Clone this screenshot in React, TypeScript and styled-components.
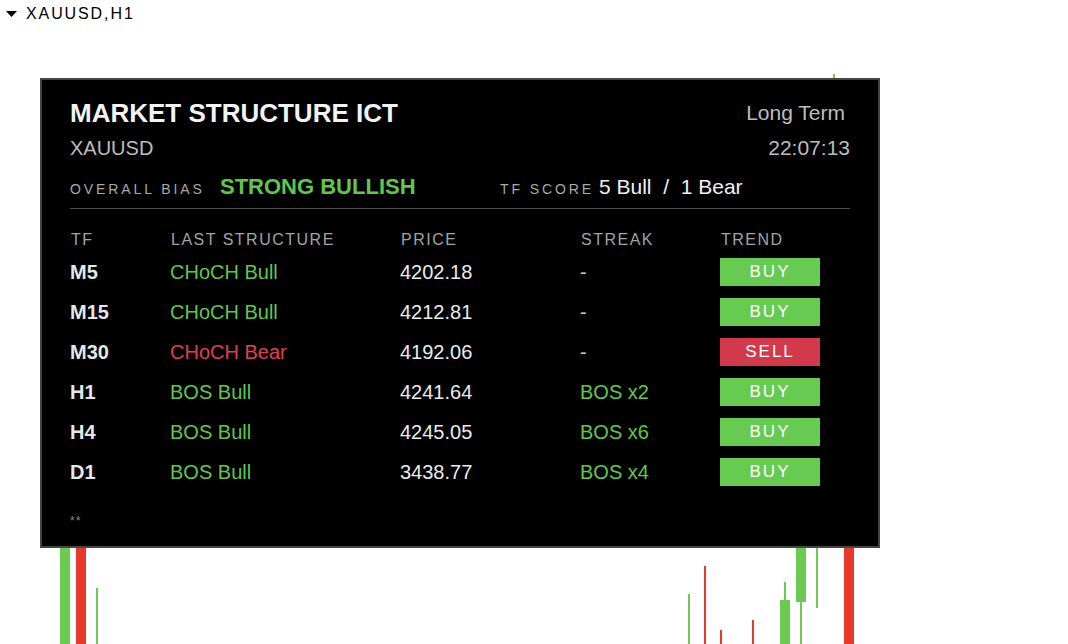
import React from "react";
import styled, { createGlobalStyle } from "styled-components";

const GlobalStyle = createGlobalStyle`
  html, body {
    margin: 0;
    padding: 0;
    background: #ffffff;
  }
  body {
    font-family: "Liberation Sans", Arial, sans-serif;
  }
`;

const GREEN = "#63c64c";
const RED = "#e0404e";

// page / chart
const Page = styled.div`
  position: relative;
  width: 1068px;
  height: 644px;
  overflow: hidden;
  background: #ffffff;
`;

const ChartLayer = styled.svg`
  position: absolute;
  left: 0;
  top: 0;
  width: 1068px;
  height: 644px;
`;

const SymbolBar = styled.div`
  display: flex;
  align-items: center;
  gap: 9px;
  height: 27px;
  padding: 0 0 0 6px;
  font-size: 16px;
  letter-spacing: 1.9px;
  color: #000000;
`;

// panel
const Panel = styled.div`
  position: relative;
  box-sizing: border-box;
  width: 840px;
  height: 470px;
  margin: 51px 0 0 40px;
  padding: 18px 28px 0 28px;
  background: #000000;
  border: 2px solid #454545;
`;

const Header = styled.div`
  display: grid;
  grid-template-columns: 1fr auto;
  row-gap: 8px;
`;

const Title = styled.div`
  font-size: 26px;
  line-height: 30px;
  font-weight: 700;
  color: #f2f2f2;
`;

const Sub = styled.div<{ right?: boolean; tight?: boolean }>`
  font-size: ${(p) => (p.right ? 21 : 20)}px;
  line-height: ${(p) => (p.tight ? 24 : 30)}px;
  color: #bdbdbd;
  text-align: ${(p) => (p.right ? "right" : "left")};
  margin-right: ${(p) => (p.right && !p.tight ? 5 : 0)}px;
`;

const BiasRow = styled.div`
  display: flex;
  align-items: baseline;
  margin-top: 14px;
  line-height: 26px;
`;

const Caption = styled.span<{ w: number }>`
  width: ${(p) => p.w}px;
  font-size: 14px;
  letter-spacing: 2.9px;
  color: #a9a9a9;
`;

const BiasValue = styled.span<{ w: number }>`
  width: ${(p) => p.w}px;
  font-size: 22px;
  font-weight: 700;
  color: ${GREEN};
`;

const Score = styled.span`
  font-size: 21px;
  color: #f0f0f0;
  white-space: pre;
`;

const Divider = styled.div`
  height: 1px;
  margin-top: 6px;
  background: #4a4a4a;
`;

const TableGrid = styled.div`
  display: grid;
  grid-template-columns: 100px 230px 180px 140px 100px;
`;

const HeadRow = styled(TableGrid)`
  margin-top: 21px;
  margin-bottom: 2px;
  line-height: 20px;
  font-size: 16px;
  letter-spacing: 1.5px;
  color: #a3a3a3;
`;

const HeadCell = styled.span`
  padding-left: 1px;
`;

const Row = styled(TableGrid)`
  height: 40px;
  align-items: center;
  font-size: 20px;
`;

const TfCell = styled.span`
  font-weight: 700;
  color: #e6e6e6;
`;

const Cell = styled.span<{ tone?: "bull" | "bear" | "plain" | "dim" }>`
  color: ${(p) =>
    p.tone === "bull"
      ? GREEN
      : p.tone === "bear"
      ? RED
      : p.tone === "dim"
      ? "#c4c4c4"
      : "#ececec"};
`;

const Badge = styled.span<{ sell?: boolean }>`
  display: flex;
  align-items: center;
  justify-content: center;
  width: 100px;
  height: 28px;
  font-size: 17px;
  letter-spacing: 2px;
  color: #ffffff;
  background: ${(p) => (p.sell ? "#d23a4b" : "#67cb51")};
`;

const Footer = styled.div`
  margin-top: 22px;
  font-size: 12px;
  line-height: 14px;
  letter-spacing: 1px;
  color: #8a8a8a;
`;

type TfRow = {
  tf: string;
  structure: string;
  bull: boolean;
  price: string;
  streak: string;
};

const rows: TfRow[] = [
  { tf: "M5", structure: "CHoCH Bull", bull: true, price: "4202.18", streak: "-" },
  { tf: "M15", structure: "CHoCH Bull", bull: true, price: "4212.81", streak: "-" },
  { tf: "M30", structure: "CHoCH Bear", bull: false, price: "4192.06", streak: "-" },
  { tf: "H1", structure: "BOS Bull", bull: true, price: "4241.64", streak: "BOS x2" },
  { tf: "H4", structure: "BOS Bull", bull: true, price: "4245.05", streak: "BOS x6" },
  { tf: "D1", structure: "BOS Bull", bull: true, price: "3438.77", streak: "BOS x4" },
];

// candles behind the panel: [x, y, width, height, bull]
const candles: [number, number, number, number, boolean][] = [
  [60, 540, 10, 104, true],
  [76, 540, 10, 104, false],
  [96, 588, 2, 56, true],
  [688, 594, 2, 50, true],
  [704, 566, 2, 78, false],
  [720, 630, 2, 14, false],
  [752, 620, 2, 24, false],
  [784, 582, 2, 20, true],
  [780, 600, 10, 44, true],
  [796, 540, 10, 62, true],
  [800, 602, 2, 42, true],
  [816, 540, 2, 68, true],
  [844, 540, 10, 104, false],
  [833, 74, 2, 10, true],
];

const App: React.FC = () => {
  return (
    <Page>
      <GlobalStyle />
      <ChartLayer viewBox="0 0 1068 644">
        {candles.map(([x, y, w, h, bull], i) => (
          <rect key={i} x={x} y={y} width={w} height={h} fill={bull ? "#6acb50" : "#e8392b"} />
        ))}
      </ChartLayer>

      <SymbolBar>
        <svg width="11" height="6" viewBox="0 0 11 6">
          <polygon points="0,0 11,0 5.5,6" fill="#000" />
        </svg>
        XAUUSD,H1
      </SymbolBar>

      <Panel>
        <Header>
          <Title>MARKET STRUCTURE ICT</Title>
          <Sub right>Long Term</Sub>
          <Sub tight>XAUUSD</Sub>
          <Sub right tight>22:07:13</Sub>
        </Header>

        <BiasRow>
          <Caption w={150}>OVERALL BIAS</Caption>
          <BiasValue w={280}>STRONG BULLISH</BiasValue>
          <Caption w={99}>TF SCORE</Caption>
          <Score>{"5 Bull  /  1 Bear"}</Score>
        </BiasRow>

        <Divider />

        <HeadRow>
          <HeadCell>TF</HeadCell>
          <HeadCell>LAST STRUCTURE</HeadCell>
          <HeadCell>PRICE</HeadCell>
          <HeadCell>STREAK</HeadCell>
          <HeadCell>TREND</HeadCell>
        </HeadRow>

        {rows.map((r) => (
          <Row key={r.tf}>
            <TfCell>{r.tf}</TfCell>
            <Cell tone={r.bull ? "bull" : "bear"}>{r.structure}</Cell>
            <Cell>{r.price}</Cell>
            <Cell tone={r.streak === "-" ? "dim" : "bull"}>{r.streak}</Cell>
            <Badge sell={!r.bull}>{r.bull ? "BUY" : "SELL"}</Badge>
          </Row>
        ))}

        <Footer>**</Footer>
      </Panel>
    </Page>
  );
};

export default App;
